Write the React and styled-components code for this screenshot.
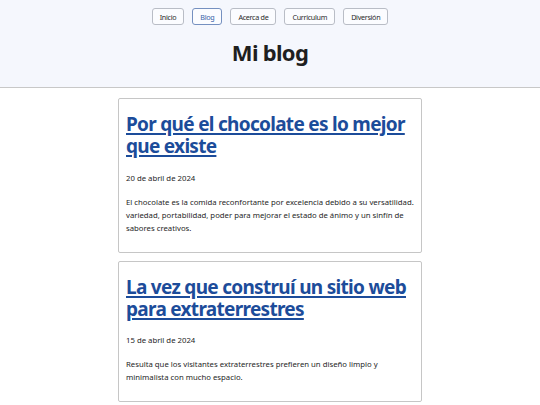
import React from "react";
import styled, { createGlobalStyle } from "styled-components";

const GlobalStyle = createGlobalStyle`
  body {
    margin: 0;
    background: #ffffff;
    font-family: "Noto Sans", "Open Sans", sans-serif;
    color: #222;
  }
`;

const Header = styled.header`
  background: #f5f7fd;
  border-bottom: 1px solid #c8c8c8;
  padding: 8px 0 20px;
  display: flex;
  flex-direction: column;
  align-items: center;
`;

const Nav = styled.nav`
  display: flex;
  gap: 8px;
`;

const NavButton = styled.a`
  display: inline-flex;
  align-items: center;
  height: 17px;
  padding: 0 7px;
  box-sizing: border-box;
  border: 1px solid ${({ active }) => (active ? "#7590c0" : "#b9bdc6")};
  border-radius: 3px;
  background: #fbfcff;
  font-size: 7.2px;
  letter-spacing: -0.3px;
  color: ${({ active }) => (active ? "#3560a8" : "#2a2a2a")};
  text-decoration: none;
`;

const Title = styled.h1`
  margin: 12px 0 0;
  font-size: 22px;
  line-height: 30px;
  letter-spacing: -0.7px;
  font-weight: 700;
  color: #1f1f1f;
`;

const Main = styled.main`
  width: 304px;
  margin: 10px auto 0;
  display: flex;
  flex-direction: column;
  gap: 8px;
`;

const Card = styled.article`
  border: 1px solid #c6c6c6;
  border-radius: 2px;
  padding: 14px 7px 17px;
`;

const PostTitle = styled.a`
  display: block;
  font-size: 19px;
  line-height: 22px;
  letter-spacing: -0.7px;
  font-weight: 700;
  color: #1c4c9a;
  text-decoration: underline;
  text-decoration-thickness: 1.5px;
  text-underline-offset: 2px;
`;

const PostDate = styled.p`
  margin: 14.5px 0 0;
  font-size: 7.75px;
  line-height: 13px;
  color: #262626;
`;

const PostBody = styled.p`
  margin: 11px 0 0;
  font-size: 7.75px;
  line-height: 13px;
  color: #262626;
`;

const links = ["Inicio", "Blog", "Acerca de", "Curriculum", "Diversión"];

const posts = [
  {
    title: "Por qué el chocolate es lo mejor que existe",
    date: "20 de abril de 2024",
    body:
      "El chocolate es la comida reconfortante por excelencia debido a su versatilidad. variedad, portabilidad, poder para mejorar el estado de ánimo y un sinfín de sabores creativos.",
  },
  {
    title: "La vez que construí un sitio web para extraterrestres",
    date: "15 de abril de 2024",
    body:
      "Resulta que los visitantes extraterrestres prefieren un diseño limpio y minimalista con mucho espacio.",
  },
];

export default function App() {
  return (
    <>
      <GlobalStyle />
      <Header>
        <Nav>
          {links.map((l) => (
            <NavButton key={l} href="#" active={l === "Blog"}>
              {l}
            </NavButton>
          ))}
        </Nav>
        <Title>Mi blog</Title>
      </Header>
      <Main>
        {posts.map((p) => (
          <Card key={p.date}>
            <PostTitle href="#">{p.title}</PostTitle>
            <PostDate>{p.date}</PostDate>
            <PostBody>{p.body}</PostBody>
          </Card>
        ))}
      </Main>
    </>
  );
}
